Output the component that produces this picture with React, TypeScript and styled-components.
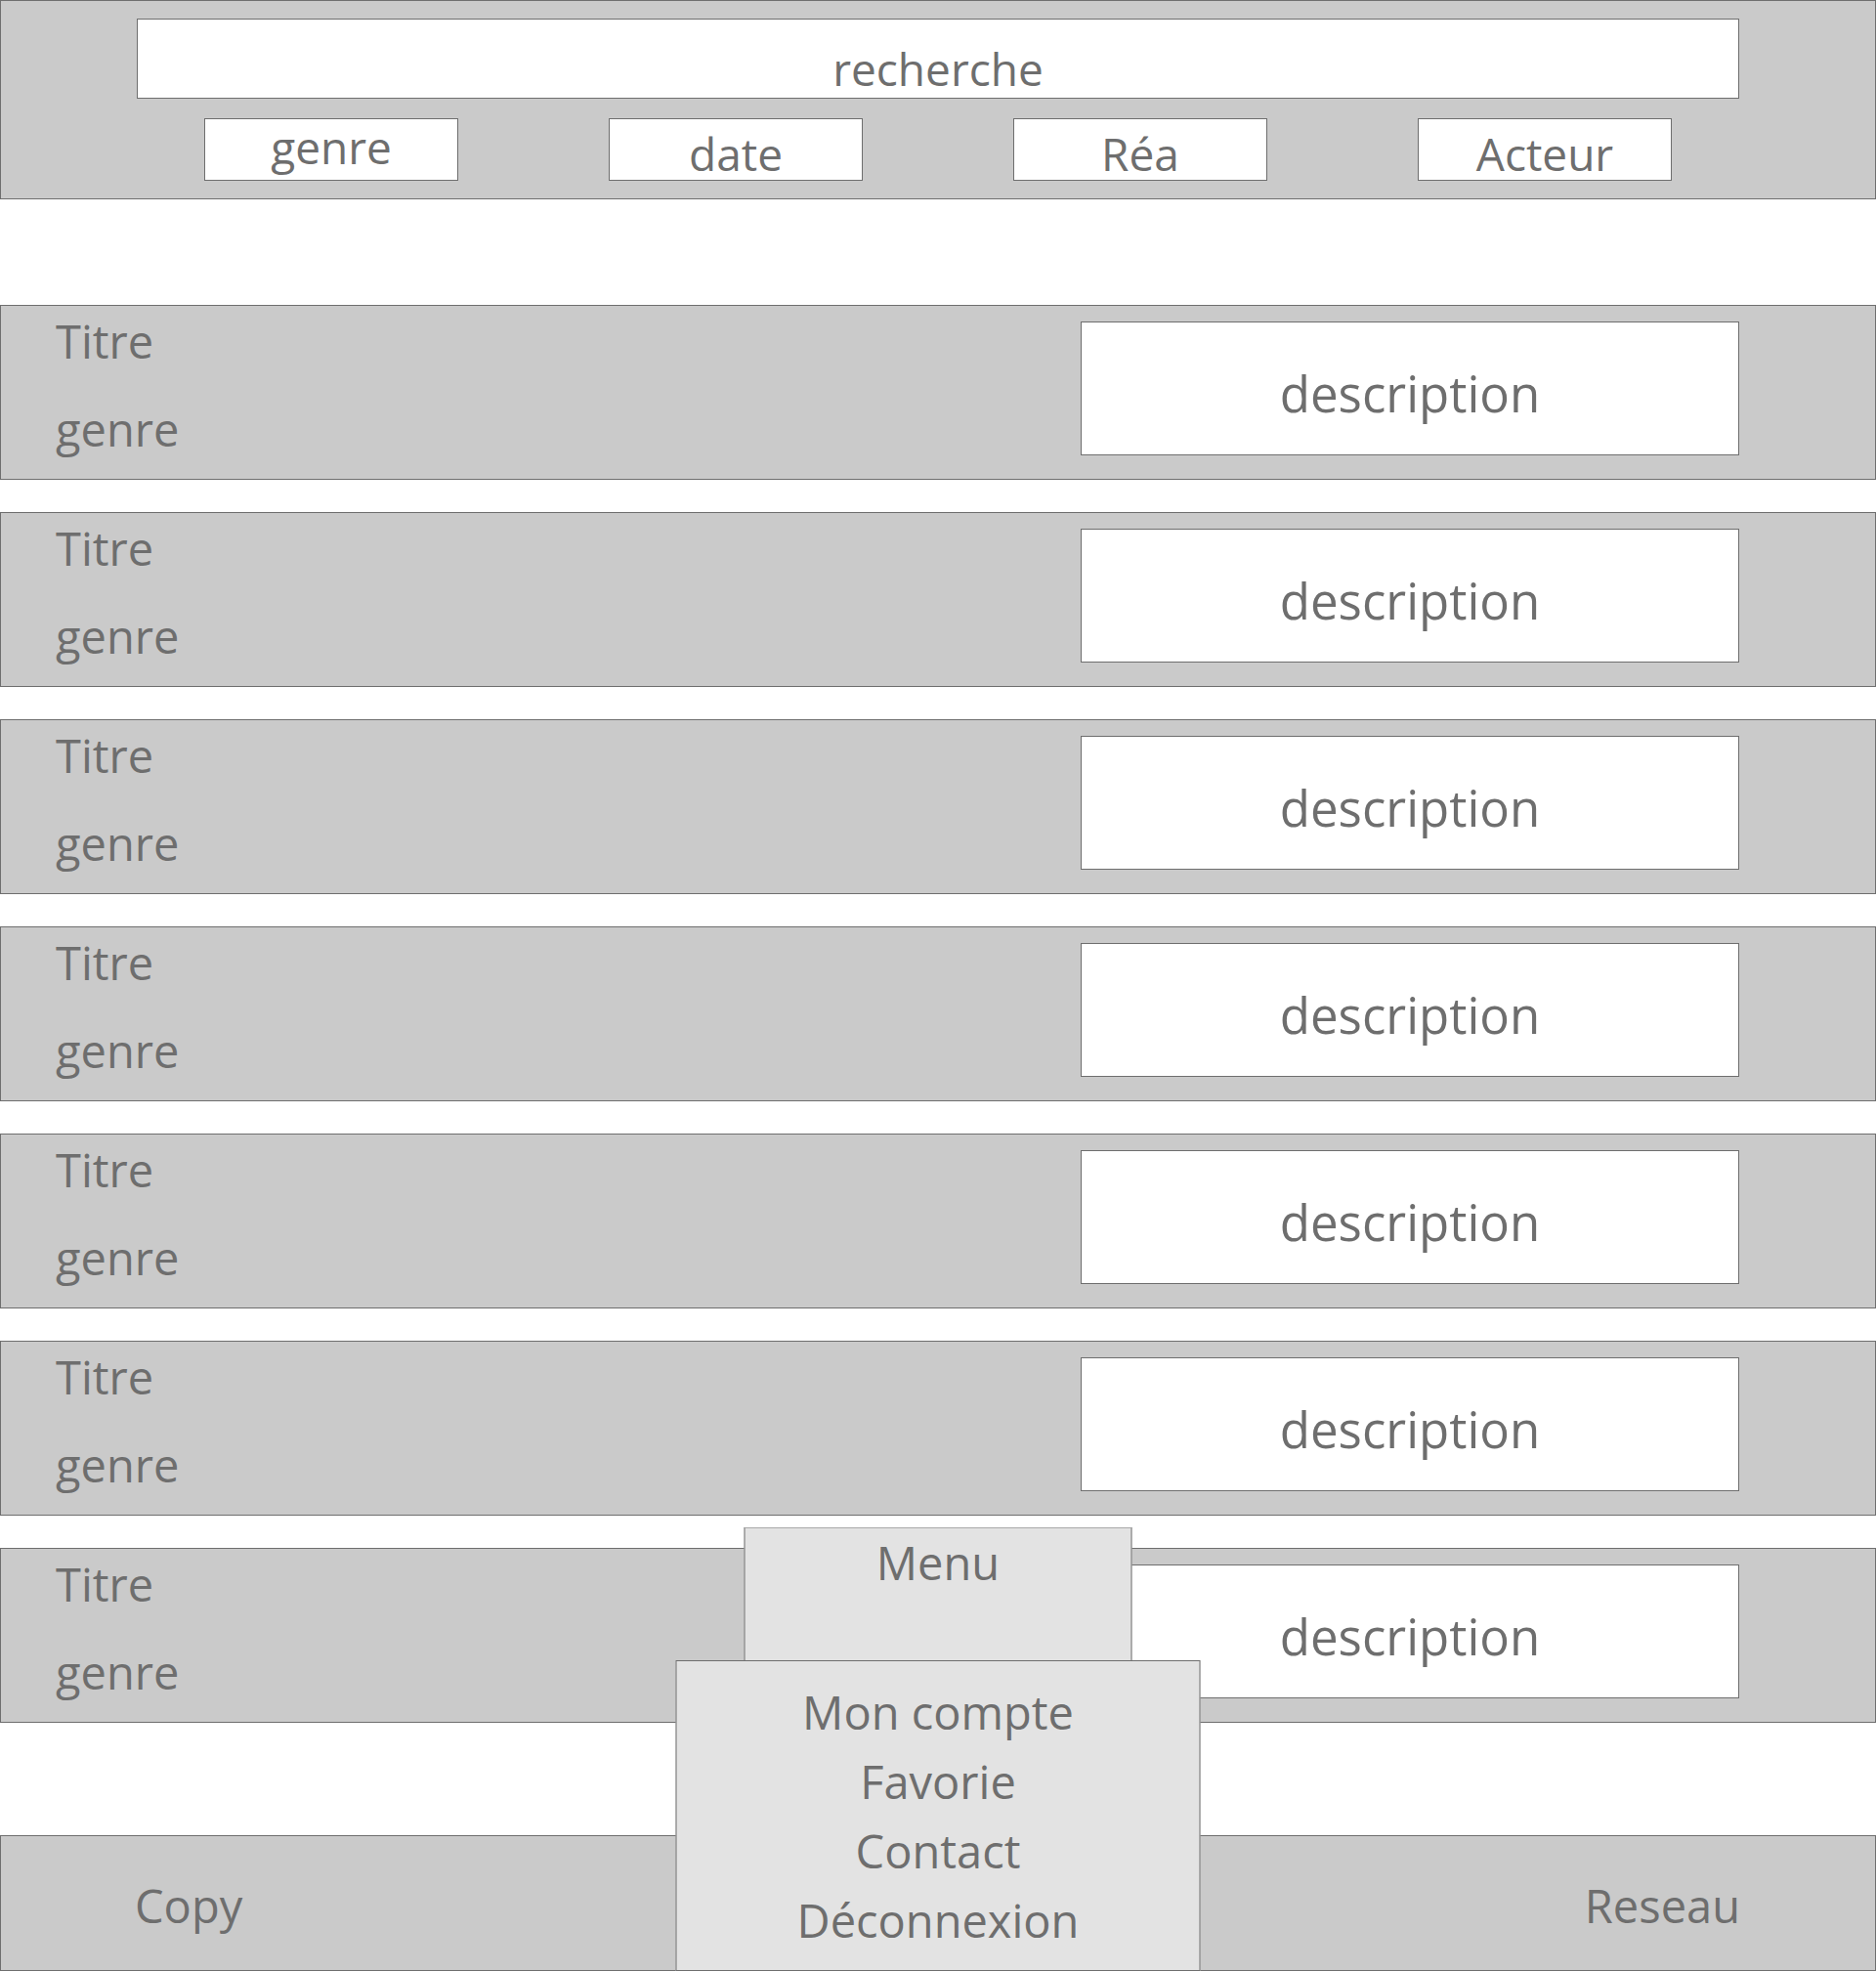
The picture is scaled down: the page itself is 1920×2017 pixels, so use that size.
import styled, { createGlobalStyle } from "styled-components";

const GlobalStyle = createGlobalStyle`
  html, body {
    margin: 0;
    padding: 0;
    background: #ffffff;
  }
  body {
    font-family: "Open Sans", "Noto Sans", sans-serif;
    color: #6e6e6e;
  }
  * {
    box-sizing: border-box;
  }
`;

const rows = [1, 2, 3, 4, 5, 6, 7];
const filters = [
  { label: "genre", lift: true },
  { label: "date", lift: false },
  { label: "Réa", lift: false },
  { label: "Acteur", lift: false },
];
const menuItems = ["Mon compte", "Favorie", "Contact", "Déconnexion"];

const App = () => {
  return (
    <StyledPage>
      <GlobalStyle />
      <Header>
        <Search>recherche</Search>
        <Filters>
          {filters.map((f) => (
            <FilterButton key={f.label}>
              <FilterLabel $lift={f.lift}>{f.label}</FilterLabel>
            </FilterButton>
          ))}
        </Filters>
      </Header>

      <List>
        {rows.map((r) => (
          <Row key={r}>
            <Info>
              <InfoLine>Titre</InfoLine>
              <InfoLine>genre</InfoLine>
            </Info>
            <Description>description</Description>
          </Row>
        ))}
      </List>

      <Footer>
        <FooterText>Copy</FooterText>
        <FooterText>Reseau</FooterText>
      </Footer>

      <Menu>
        <MenuTab>Menu</MenuTab>
        <MenuList>
          {menuItems.map((item) => (
            <MenuItem key={item}>{item}</MenuItem>
          ))}
        </MenuList>
      </Menu>
    </StyledPage>
  );
};

const StyledPage = styled.div`
  position: relative;
  width: 1920px;
  min-height: 2017px;
  display: flex;
  flex-direction: column;
`;

const Header = styled.header`
  height: 204px;
  background: #cacaca;
  border: 1px solid #6e6e6e;
  padding: 18px 139px 0;
  display: flex;
  flex-direction: column;
  gap: 20px;
`;

const Search = styled.div`
  height: 82px;
  background: #ffffff;
  border: 1px solid #6e6e6e;
  padding-top: 20px;
  font-size: 46px;
  line-height: 60px;
  text-align: center;
`;

const Filters = styled.div`
  display: flex;
  justify-content: center;
  gap: 154px;
`;

const FilterButton = styled.div`
  width: 260px;
  height: 64px;
  background: #ffffff;
  border: 1px solid #6e6e6e;
  padding-top: 5px;
  font-size: 46px;
  line-height: 60px;
  text-align: center;
`;

const FilterLabel = styled.span<{ $lift: boolean }>`
  display: inline-block;
  transform: translateY(${(p) => (p.$lift ? "-7px" : "0")});
`;

const List = styled.main`
  display: flex;
  flex-direction: column;
  gap: 33px;
  margin-top: 108px;
`;

const Row = styled.div`
  height: 179px;
  background: #cacaca;
  border: 1px solid #6e6e6e;
  padding: 0 139px 0 56px;
  display: flex;
  justify-content: space-between;
  align-items: flex-start;
`;

const Info = styled.div`
  display: flex;
  flex-direction: column;
  gap: 26px;
  padding-top: 4px;
`;

const InfoLine = styled.p`
  margin: 0;
  font-size: 47px;
  line-height: 64px;
`;

const Description = styled.div`
  width: 674px;
  height: 137px;
  margin-top: 16px;
  background: #ffffff;
  border: 1px solid #6e6e6e;
  padding-top: 37px;
  font-size: 51px;
  line-height: 70px;
  text-align: center;
`;

const Footer = styled.footer`
  height: 139px;
  margin-top: 115px;
  background: #cacaca;
  border: 1px solid #6e6e6e;
  padding: 4px 138px 0 137px;
  display: flex;
  justify-content: space-between;
  align-items: center;
`;

const FooterText = styled.span`
  font-size: 47px;
  line-height: 64px;
`;

const Menu = styled.nav`
  position: absolute;
  left: 50%;
  bottom: 0;
  transform: translateX(-50%);
  display: flex;
  flex-direction: column;
  align-items: center;
`;

const MenuTab = styled.div`
  width: 397px;
  height: 136px;
  background: #e3e3e3;
  border: 1px solid #6e6e6e;
  border-top-color: #a9a9a9;
  border-bottom: none;
  padding-top: 3px;
  font-size: 47px;
  line-height: 64px;
  text-align: center;
`;

const MenuList = styled.ul`
  width: 537px;
  height: 318px;
  margin: 0;
  padding: 17px 0 0;
  list-style: none;
  background: #e3e3e3;
  border: 1px solid #6e6e6e;
  text-align: center;
`;

const MenuItem = styled.li`
  font-size: 47px;
  line-height: 71px;
`;

export default App;
